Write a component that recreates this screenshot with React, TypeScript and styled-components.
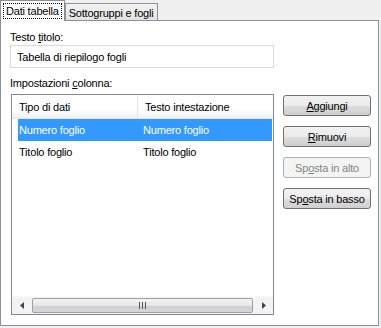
import styled, { createGlobalStyle } from 'styled-components'

const Global = createGlobalStyle`
  html, body {
    margin: 0;
    padding: 0;
    background: #f0f0f0;
  }
  body {
    font-family: Tahoma, "Liberation Sans", "DejaVu Sans", sans-serif;
    font-size: 11px;
    letter-spacing: -0.2px;
    color: #000;
  }
`

const Window = styled.div`
  width: 381px;
  height: 328px;
  display: flex;
  flex-direction: column;
`

const TabStrip = styled.div`
  display: flex;
  align-items: flex-end;
  height: 21px;
  position: relative;
  z-index: 1;
`

const Tab = styled.div<{ $active?: boolean }>`
  box-sizing: border-box;
  height: ${p => (p.$active ? '21px' : '18px')};
  padding: ${p => (p.$active ? '2px 2px 0' : '2px 3px 0')};
  border: 1px solid #8d8f99;
  border-bottom: ${p => (p.$active ? 'none' : '1px solid #8d8f99')};
  background: ${p => (p.$active ? '#fff' : 'linear-gradient(#f2f2f2, #e3e3e3)')};
  white-space: nowrap;
  line-height: 14px;
`

const Focus = styled.span`
  display: inline-block;
  border: 1px dotted #000;
  padding: 0 2px;
  line-height: 14px;
`

const Panel = styled.div`
  box-sizing: border-box;
  width: 379px;
  height: 306px;
  margin-top: -1px;
  background: #fff;
  border: 1px solid #8d8f99;
  padding: 10px 0 0 9px;
  display: flex;
  flex-direction: column;
`

const Label = styled.div<{ $gap?: number }>`
  line-height: 13px;
  margin-top: ${p => p.$gap ?? 0}px;
`

const TextBox = styled.div`
  box-sizing: border-box;
  margin-top: 1px;
  width: 264px;
  height: 23px;
  border: 1px solid #dadada;
  padding: 0 6px;
  display: flex;
  align-items: center;
`

const Body = styled.div`
  display: flex;
  margin-top: 4px;
  gap: 9px;
`

const List = styled.div`
  box-sizing: border-box;
  margin-left: 1px;
  width: 263px;
  height: 221px;
  border: 1px solid #828790;
  display: flex;
  flex-direction: column;
`

const Header = styled.div`
  display: flex;
  height: 23px;
  background: linear-gradient(#fff 0%, #fff 60%, #f1f2f4 100%);
  border-bottom: 1px solid #e5e5e5;
`

const HeadCell = styled.div<{ $w: number; $last?: boolean }>`
  box-sizing: border-box;
  width: ${p => p.$w}px;
  padding-left: 7px;
  display: flex;
  align-items: center;
  border-right: ${p => (p.$last ? 'none' : '1px solid #e5e5e5')};
`

const Rows = styled.div`
  flex: 1;
`

const Row = styled.div<{ $sel?: boolean }>`
  display: flex;
  height: 22px;
  margin-left: 6px;
  margin-right: 1px;
  background: ${p => (p.$sel ? '#3399ff' : 'transparent')};
  color: ${p => (p.$sel ? '#fff' : '#000')};
`

const Cell = styled.div<{ $w: number }>`
  width: ${p => p.$w}px;
  padding-left: 1px;
  display: flex;
  align-items: center;
`

const HScroll = styled.div`
  display: flex;
  align-items: center;
  height: 17px;
  background: #f3f3f3;
  border-top: 1px solid #f9f9f9;
`

const Arrow = styled.div`
  width: 19px;
  height: 17px;
  display: flex;
  align-items: center;
  justify-content: center;
`

const Thumb = styled.div`
  box-sizing: border-box;
  flex: 1;
  height: 15px;
  border: 1px solid #a0a0a0;
  border-radius: 2px;
  background: linear-gradient(#f3f3f3 0%, #e6e6e6 50%, #cfcfcf 51%, #d6d6d6 100%);
  display: flex;
  align-items: center;
  justify-content: center;
  margin: 0 1px;
`

const Buttons = styled.div`
  display: flex;
  flex-direction: column;
  gap: 10px;
  padding-top: 1px;
`

const Button = styled.div<{ $disabled?: boolean }>`
  box-sizing: border-box;
  width: 88px;
  height: 21px;
  border: 1px solid ${p => (p.$disabled ? '#adb2b5' : '#707070')};
  border-radius: 3px;
  background: ${p =>
    p.$disabled
      ? '#f4f4f4'
      : 'linear-gradient(#f2f2f2 0%, #ebebeb 50%, #dddddd 51%, #cfcfcf 100%)'};
  color: ${p => (p.$disabled ? '#838383' : '#000')};
  display: flex;
  align-items: center;
  justify-content: center;
`

const U = styled.span`
  text-decoration: underline;
`

const COL1 = 124
const COL2 = 130

export default function App() {
  return (
    <Window>
      <Global />
      <TabStrip>
        <Tab $active>
          <Focus>Dati tabella</Focus>
        </Tab>
        <Tab>Sottogruppi e fogli</Tab>
      </TabStrip>
      <Panel>
        <Label>
          Testo <U>t</U>itolo:
        </Label>
        <TextBox>Tabella di riepilogo fogli</TextBox>
        <Label $gap={9}>
          Impostazioni <U>c</U>olonna:
        </Label>
        <Body>
          <List>
            <Header>
              <HeadCell $w={COL1 + 2}>Tipo di dati</HeadCell>
              <HeadCell $w={COL2 + 5} $last>
                Testo intestazione
              </HeadCell>
            </Header>
            <Rows>
              <Row $sel>
                <Cell $w={COL1}>Numero foglio</Cell>
                <Cell $w={COL2}>Numero foglio</Cell>
              </Row>
              <Row>
                <Cell $w={COL1}>Titolo foglio</Cell>
                <Cell $w={COL2}>Titolo foglio</Cell>
              </Row>
            </Rows>
            <HScroll>
              <Arrow>
                <svg width="4" height="7" viewBox="0 0 4 7">
                  <path d="M4 0 L0 3.5 L4 7 Z" fill="#444" />
                </svg>
              </Arrow>
              <Thumb>
                <svg width="7" height="7" viewBox="0 0 7 7">
                  <path d="M0.5 0 V7 M3.5 0 V7 M6.5 0 V7" stroke="#555" strokeWidth="1" />
                </svg>
              </Thumb>
              <Arrow>
                <svg width="4" height="7" viewBox="0 0 4 7">
                  <path d="M0 0 L4 3.5 L0 7 Z" fill="#444" />
                </svg>
              </Arrow>
            </HScroll>
          </List>
          <Buttons>
            <Button>
              <span>
                <U>A</U>ggiungi
              </span>
            </Button>
            <Button>
              <span>
                <U>R</U>imuovi
              </span>
            </Button>
            <Button $disabled>
              <span>
                Sp<U>o</U>sta in alto
              </span>
            </Button>
            <Button>
              <span>
                Sp<U>o</U>sta in basso
              </span>
            </Button>
          </Buttons>
        </Body>
      </Panel>
    </Window>
  )
}
